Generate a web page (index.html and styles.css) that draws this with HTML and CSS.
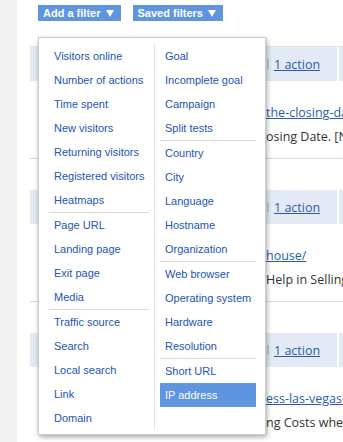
FILE: index.html
```html
<!DOCTYPE html>
<html lang="en">
<head>
    <meta charset="UTF-8">
    <meta name="viewport" content="width=device-width, initial-scale=1.0">
    <title>Visits Log - Segments</title>
    <link rel="stylesheet" href="styles.css">
</head>
<body>
    <div class="page">
        <div class="sidebar"></div>
        <div class="main">
            <div class="toolbar">
                <a class="filter-btn">Add a filter <span class="caret"></span></a>
                <a class="filter-btn">Saved filters <span class="caret"></span></a>
            </div>

            <!-- visits table, mostly hidden behind the menu -->
            <div class="visits">
                <div class="visit">
                    <div class="band">
                        <div class="band-gap"></div>
                        <div class="band-actions"><span class="tick"></span><a class="link">1 action</a></div>
                        <div class="band-split"></div>
                        <div class="band-rest"></div>
                    </div>
                    <div class="details">
                        <a class="link">the-closing-date-and-after/</a>
                        <p>osing Date. [Next steps after closing]</p>
                    </div>
                </div>
                <div class="visit">
                    <div class="band">
                        <div class="band-gap"></div>
                        <div class="band-actions"><span class="tick"></span><a class="link">1 action</a></div>
                        <div class="band-split"></div>
                        <div class="band-rest"></div>
                    </div>
                    <div class="details">
                        <a class="link">house/</a>
                        <p>Help in Selling Your House</p>
                    </div>
                </div>
                <div class="visit">
                    <div class="band">
                        <div class="band-gap"></div>
                        <div class="band-actions"><span class="tick"></span><a class="link">1 action</a></div>
                        <div class="band-split"></div>
                        <div class="band-rest"></div>
                    </div>
                    <div class="details">
                        <a class="link">ess-las-vegas-closing-costs/</a>
                        <p>ng Costs when Selling</p>
                    </div>
                </div>
            </div>

            <!-- Add a filter dropdown -->
            <div class="filter-menu">
                <div class="menu-col menu-left">
                    <ul class="menu-group">
                        <li>Visitors online</li>
                        <li>Number of actions</li>
                        <li>Time spent</li>
                        <li>New visitors</li>
                        <li>Returning visitors</li>
                        <li>Registered visitors</li>
                        <li>Heatmaps</li>
                    </ul>
                    <ul class="menu-group">
                        <li>Page URL</li>
                        <li>Landing page</li>
                        <li>Exit page</li>
                        <li>Media</li>
                    </ul>
                    <ul class="menu-group">
                        <li>Traffic source</li>
                        <li>Search</li>
                        <li>Local search</li>
                        <li>Link</li>
                        <li>Domain</li>
                    </ul>
                </div>
                <div class="menu-divider"></div>
                <div class="menu-col menu-right">
                    <ul class="menu-group">
                        <li>Goal</li>
                        <li>Incomplete goal</li>
                        <li>Campaign</li>
                        <li>Split tests</li>
                    </ul>
                    <ul class="menu-group">
                        <li>Country</li>
                        <li>City</li>
                        <li>Language</li>
                        <li>Hostname</li>
                        <li>Organization</li>
                    </ul>
                    <ul class="menu-group">
                        <li>Web browser</li>
                        <li>Operating system</li>
                        <li>Hardware</li>
                        <li>Resolution</li>
                    </ul>
                    <ul class="menu-group">
                        <li>Short URL</li>
                        <li class="active">IP address</li>
                    </ul>
                </div>
            </div>
        </div>
    </div>
</body>
</html>
```

FILE: styles.css
```css
body {
    margin: 0;
    background-color: #ffffff;
    font-family: "Open Sans", "Liberation Sans", sans-serif;
    overflow: hidden;
}

.page {
    display: flex;
    height: 442px;
}

.sidebar {
    width: 17px;
    background-color: #f2f2f2;
}

.main {
    flex: 1;
    position: relative; /* the dropdown sits over the table */
    overflow: hidden;
}

.toolbar {
    display: flex;
    gap: 12px;
    padding: 5px 0 0 21px;
}

.filter-btn {
    display: flex;
    align-items: center;
    height: 16px;
    padding: 0 7px 0 5px;
    background-color: #5f94df;
    color: #ffffff;
    font-family: "Liberation Sans", Arial, sans-serif;
    font-size: 11px;
    font-weight: bold;
    white-space: pre;
}

.caret {
    width: 0;
    height: 0;
    margin-left: 2px;
    border-left: 4px solid transparent;
    border-right: 4px solid transparent;
    border-top: 7px solid #ffffff;
}

/* visits table */
.visits {
    margin: 25px 0 0 13px;
    width: 400px;
    border-top: 1px solid #dde1ec;
}

.visit {
    margin-bottom: 31px;
}

.band {
    display: flex;
    align-items: center;
    height: 34px;
    background-color: #e4eaf5;
}

.band-gap {
    width: 237px;
}

.band-actions {
    display: flex;
    align-items: center;
    gap: 5px;
    width: 70px;
}

.tick {
    width: 2px;
    height: 10px;
    background-color: #c9cbd0;
}

.band-split {
    width: 2px;
    align-self: stretch;
    background-color: #ffffff;
}

.band-rest {
    flex: 1;
}

.link {
    color: #2a5bb0;
    text-decoration: underline;
    font-size: 12.5px;
    white-space: nowrap;
}

.details {
    padding: 20px 0 9px 236px;
    border-bottom: 1px solid #d6d8e4;
}

.details .link {
    display: block;
    line-height: 24px;
}

.details p {
    margin: 0;
    line-height: 24px;
    font-size: 12.5px;
    color: #333333;
    white-space: nowrap;
}

/* filter dropdown */
.filter-menu {
    position: absolute;
    left: 21px;
    top: 37px;
    display: flex;
    padding: 6px 9px 4px 10px;
    background-color: #ffffff;
    border: 1px solid #cccccc;
    box-shadow: 1px 2px 5px rgba(0, 0, 0, 0.35);
}

.menu-col {
    display: flex;
    flex-direction: column;
}

.menu-left {
    width: 100px;
}

.menu-right {
    width: 96px;
}

.menu-divider {
    width: 1px;
    margin: -1px 5px 0 5px;
    background-color: #e6e6e6;
}

.menu-group {
    list-style: none;
    margin: 0;
    padding: 0;
}

.menu-group + .menu-group {
    border-top: 1px solid #d9d9d9;
}

.menu-group li {
    height: 24px;
    line-height: 24px;
    padding: 0 5px;
    font-family: "Liberation Sans", Arial, sans-serif;
    font-size: 11px;
    color: #2454b4;
    white-space: nowrap;
}

.menu-group li.active {
    background-color: #5f94df;
    color: #ffffff;
}
```
